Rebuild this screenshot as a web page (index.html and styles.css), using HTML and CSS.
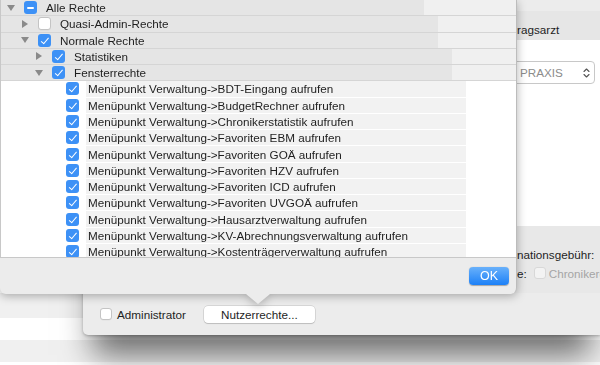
FILE: index.html
```html
<!DOCTYPE html>
<html lang="de">
<head>
    <meta charset="UTF-8">
    <title>Nutzerrechte</title>
    <link rel="stylesheet" href="styles.css">
</head>
<body>
<div id="desk">
    <!-- Hauptfenster im Hintergrund -->
    <div class="main-list">
        <div class="main-row grey"></div>
        <div class="main-row"></div>
        <div class="main-row grey"></div>
        <div class="main-row"></div>
    </div>

    <!-- Sheet mit Benutzerdaten -->
    <div id="sheet">
        <div class="sheet-body">
            <div class="side">
                <div class="side-top"></div>
                <div class="side-head">ragsarzt</div>
                <div class="side-form">
                    <div class="popup">
                        <span>PRAXIS</span>
                        <svg width="7" height="12" viewBox="0 0 7 12"><path d="M1 4.5L3.5 2 6 4.5M1 7.5L3.5 10 6 7.5" fill="none" stroke="#555" stroke-width="1.1" stroke-linecap="round" stroke-linejoin="round"/></svg>
                    </div>
                </div>
                <div class="side-gray">
                    <div class="side-line">nationsgebühr:</div>
                    <div class="side-line">e:<span class="cb dis"></span><span class="dim">Chronikerg</span></div>
                </div>
            </div>
        </div>
        <div class="sheet-foot">
            <span class="cb off"></span>
            <span class="admin">Administrator</span>
            <button class="btn">Nutzerrechte...</button>
        </div>
    </div>

    <!-- Popover mit Rechtebaum -->
    <div id="popover">
        <div class="tree">
            <div class="row group lv0"><div class="cell"><span class="tw open"></span><span class="cb mixed"></span><span class="txt">Alle Rechte</span></div></div>
            <div class="row group lv1"><div class="cell"><span class="tw closed"></span><span class="cb off"></span><span class="txt">Quasi-Admin-Rechte</span></div></div>
            <div class="row group lv1"><div class="cell"><span class="tw open"></span><span class="cb on"></span><span class="txt">Normale Rechte</span></div></div>
            <div class="row group lv2"><div class="cell"><span class="tw closed"></span><span class="cb on"></span><span class="txt">Statistiken</span></div></div>
            <div class="row group lv2"><div class="cell"><span class="tw open"></span><span class="cb on"></span><span class="txt">Fensterrechte</span></div></div>
            <div class="row item"><span class="cb on"></span><span class="txt">Menüpunkt Verwaltung-&gt;BDT-Eingang aufrufen</span></div>
            <div class="row item"><span class="cb on"></span><span class="txt">Menüpunkt Verwaltung-&gt;BudgetRechner aufrufen</span></div>
            <div class="row item"><span class="cb on"></span><span class="txt">Menüpunkt Verwaltung-&gt;Chronikerstatistik aufrufen</span></div>
            <div class="row item"><span class="cb on"></span><span class="txt">Menüpunkt Verwaltung-&gt;Favoriten EBM aufrufen</span></div>
            <div class="row item"><span class="cb on"></span><span class="txt">Menüpunkt Verwaltung-&gt;Favoriten GOÄ aufrufen</span></div>
            <div class="row item"><span class="cb on"></span><span class="txt">Menüpunkt Verwaltung-&gt;Favoriten HZV aufrufen</span></div>
            <div class="row item"><span class="cb on"></span><span class="txt">Menüpunkt Verwaltung-&gt;Favoriten ICD aufrufen</span></div>
            <div class="row item"><span class="cb on"></span><span class="txt">Menüpunkt Verwaltung-&gt;Favoriten UVGOÄ aufrufen</span></div>
            <div class="row item"><span class="cb on"></span><span class="txt">Menüpunkt Verwaltung-&gt;Hausarztverwaltung aufrufen</span></div>
            <div class="row item"><span class="cb on"></span><span class="txt">Menüpunkt Verwaltung-&gt;KV-Abrechnungsverwaltung aufrufen</span></div>
            <div class="row item"><span class="cb on"></span><span class="txt">Menüpunkt Verwaltung-&gt;Kostenträgerverwaltung aufrufen</span></div>
        </div>
        <div class="pop-foot">
            <button class="ok">OK</button>
        </div>
        <div class="arrow"></div>
    </div>
</div>
</body>
</html>
```

FILE: styles.css
```css
*{
    margin: 0;
    padding: 0;
    box-sizing: border-box;
}
body{
    width: 600px;
    height: 365px;
    overflow: hidden;
    background: #fff;
    color: #1e1e1e;
    font-family: "Liberation Sans", Arial, sans-serif;
    font-size: 11.7px;
}
#desk{
    position: relative;
    width: 600px;
    height: 365px;
    overflow: hidden;
}

/* Hauptfenster */
.main-list{
    display: flex;
    flex-direction: column;
    padding-top: 293px;
}
.main-row{
    height: 22px;
    background: #fff;
}
.main-row.grey{
    background: #f0f0f0;
}
.main-row:first-child{
    height: 25px;
}

/* Sheet */
#sheet{
    position: absolute;
    left: 83px;
    top: 0;
    width: 517px;
    height: 335px;
    display: grid;
    grid-template-rows: 293px 42px;
    background: #ececec;
    border-radius: 0 0 0 5px;
    box-shadow: 0 30px 30px -10px rgba(0,0,0,.55), 0 1px 3px rgba(0,0,0,.25);
}
.sheet-body{
    display: flex;
    justify-content: flex-end;
}
.side{
    width: 110px;
    display: flex;
    flex-direction: column;
    background: #fff;
}
.side-top{
    height: 11px;
    background: #ececec;
}
.side-head{
    height: 29px;
    padding: 7px 0 0 27px;
    display: flex;
    align-items: center;
    background: #e6e6e6;
}
.side-form{
    height: 186px;
    padding-top: 21px;
}
.popup{
    height: 23px;
    margin-right: 5px;
    padding: 0 4px 0 29px;
    display: flex;
    align-items: center;
    justify-content: space-between;
    background: #fff;
    border: 1px solid #c8c8c8;
    border-radius: 4px;
    color: #8c8c8c;
}
.side-gray{
    flex: 1;
    padding: 20px 0 0 27px;
    display: flex;
    flex-direction: column;
    gap: 3px;
    background: #e8e8e8;
    white-space: nowrap;
}
.side-line{
    height: 16px;
    display: flex;
    align-items: center;
}
.side-line .cb{
    margin: 0 3px 0 7px;
}
.dim{
    color: #a5a5a5;
}
.sheet-foot{
    display: flex;
    align-items: center;
    padding-left: 17px;
}
.admin{
    margin-left: 5px;
}
.btn{
    margin-left: 18px;
    width: 111px;
    height: 17px;
    background: #fff;
    border: none;
    border-radius: 4px;
    box-shadow: 0 0 0 .5px rgba(0,0,0,.18), 0 1px 1px rgba(0,0,0,.12);
    font: inherit;
    color: #1e1e1e;
}

/* Popover */
#popover{
    position: absolute;
    left: 0;
    top: 0;
    width: 517px;
    height: 294px;
    display: flex;
    flex-direction: column;
    background: #ececec;
    border-right: 1px solid #bcbcbc;
    border-radius: 0 0 6px 6px;
    filter: drop-shadow(0 2px 5px rgba(0,0,0,.3));
}
.arrow{
    position: absolute;
    left: 246px;
    bottom: -10px;
    border-left: 12px solid transparent;
    border-right: 12px solid transparent;
    border-top: 10px solid #ececec;
}
.tree{
    height: 258px;
    overflow: hidden;
    background: #fff;
    border-left: 1px solid #c8c8c8;
    border-bottom: 1px solid #c8c8c8;
}
.pop-foot{
    flex: 1;
    display: flex;
    align-items: center;
    justify-content: flex-end;
    padding-right: 7px;
}
.ok{
    width: 40px;
    height: 18px;
    border: none;
    border-radius: 4px;
    background: linear-gradient(#69b1fb, #1c80f7);
    box-shadow: 0 .5px 1px rgba(0,0,0,.3);
    color: #fff;
    font: inherit;
    font-size: 12.5px;
}

/* Baumzeilen */
.row{
    display: flex;
    align-items: center;
    height: 16.27px;
    white-space: nowrap;
}
.group{
    background: #f0f0f0;
    border-bottom: 1px solid #d5d5d5;
}
.group .cell{
    height: 100%;
    display: flex;
    align-items: center;
    background: #e5e5e5;
}
.lv0 .cell{
    width: 423px;
    padding-left: 5px;
}
.lv1 .cell{
    width: 437px;
    padding-left: 19px;
}
.lv2 .cell{
    width: 451px;
    padding-left: 33px;
}
.group .txt{
    margin-left: 9px;
}
.item{
    padding-left: 65px;
    border-bottom: 1px solid #fff;
}
.item .txt{
    width: 380px;
    height: 100%;
    margin-left: 7px;
    padding-left: 2px;
    display: flex;
    align-items: center;
    background: #f2f2f2;
}

/* Aufklapp-Dreiecke */
.tw{
    width: 10px;
    height: 9px;
    margin-right: 8px;
    display: flex;
    align-items: center;
    justify-content: center;
}
.tw.closed::before{
    content: '';
    border-left: 6px solid #8a8a8a;
    border-top: 4px solid transparent;
    border-bottom: 4px solid transparent;
}
.tw.open::before{
    content: '';
    border-top: 6px solid #8a8a8a;
    border-left: 4px solid transparent;
    border-right: 4px solid transparent;
}

/* Checkboxen */
.cb{
    position: relative;
    flex: none;
    width: 13px;
    height: 13px;
    border-radius: 3px;
}
.cb.on,.cb.mixed{
    background: #3d91f6;
}
.cb.on::after{
    content: '';
    position: absolute;
    left: 4.6px;
    top: 2px;
    width: 3px;
    height: 6.5px;
    border: solid #fff;
    border-width: 0 1.6px 1.6px 0;
    transform: rotate(40deg);
}
.cb.mixed::after{
    content: '';
    position: absolute;
    left: 3px;
    top: 5.7px;
    width: 7px;
    height: 1.7px;
    border-radius: 1px;
    background: #fff;
}
.cb.off{
    background: #fff;
    border: 1px solid #c4c4c4;
    box-shadow: 0 .5px 0 rgba(0,0,0,.05);
}
.sheet-foot .cb{
    width: 12px;
    height: 12px;
}
.cb.dis{
    width: 12px;
    height: 12px;
    background: #f3f3f3;
    border: 1px solid #d8d8d8;
}
```
